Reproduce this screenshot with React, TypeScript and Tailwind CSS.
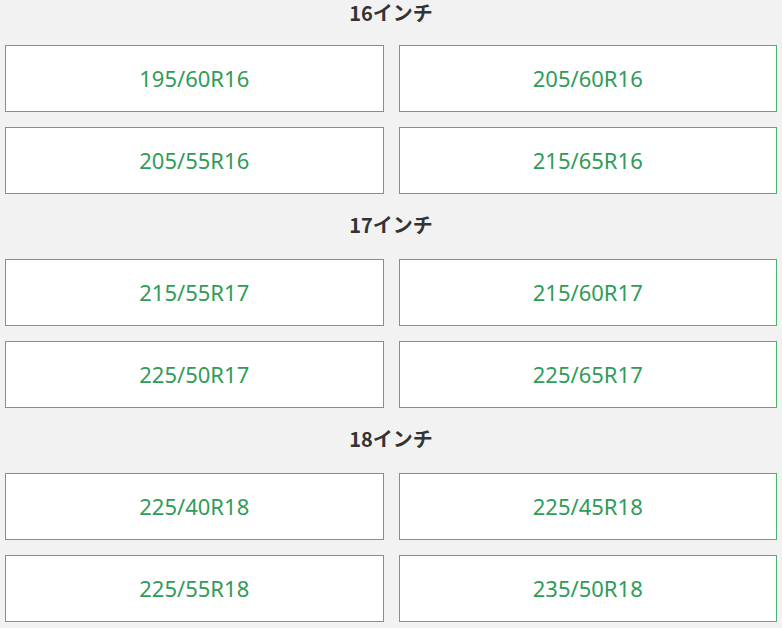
import clsx from "clsx"

const sections = [
  { inch: "16インチ", sizes: ["195/60R16", "205/60R16", "205/55R16", "215/65R16"] },
  { inch: "17インチ", sizes: ["215/55R17", "215/60R17", "225/50R17", "225/65R17"] },
  { inch: "18インチ", sizes: ["225/40R18", "225/45R18", "225/55R18", "235/50R18"] },
]

function SizeButton({ label }: { label: string }) {
  return (
    <a className="flex h-[67px] cursor-pointer items-center justify-center border border-solid border-[#47b56f] bg-white font-['Noto_Sans',sans-serif] text-[22px] text-[#2f9c58]">
      {label}
    </a>
  )
}

export default function App() {
  return (
    <div className="min-h-screen overflow-hidden bg-[#f2f2f2] pl-[5px] pr-[5px]">
      {sections.map((s, i) => (
        <section key={s.inch}>
          <h3
            className={clsx(
              "text-center font-['Noto_Sans_CJK_JP',sans-serif] text-[20px] font-bold text-[#333]",
              i === 0 ? "pb-[19px] leading-[26px]" : "pt-[15px] pb-[18px] leading-[32px]"
            )}
          >
            {s.inch}
          </h3>
          <div className="grid grid-cols-2 gap-x-[15px] gap-y-[15px]">
            {s.sizes.map((size) => (
              <SizeButton key={size} label={size} />
            ))}
          </div>
        </section>
      ))}
    </div>
  )
}
